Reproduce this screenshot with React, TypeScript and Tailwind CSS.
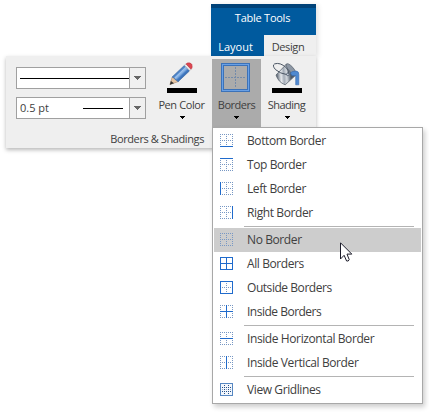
import React from "react";

type Edge = "t" | "b" | "l" | "r" | "h" | "v";

const segments: Record<Edge, number[]> = {
  t: [0, 0.5, 13, 0.5],
  b: [0, 12.5, 13, 12.5],
  l: [0.5, 0, 0.5, 13],
  r: [12.5, 0, 12.5, 13],
  h: [0, 6.5, 13, 6.5],
  v: [6.5, 0, 6.5, 13],
};
const allEdges: Edge[] = ["t", "b", "l", "r", "h", "v"];

function BorderIcon({ solid }: { solid: string }) {
  const line = (e: Edge, on: boolean) => {
    const [x1, y1, x2, y2] = segments[e];
    return (
      <line key={e} x1={x1} y1={y1} x2={x2} y2={y2} stroke={on ? "#206bcc" : "#7898c4"} strokeDasharray={on ? undefined : "1 1"} />
    );
  };
  return (
    <svg width="13" height="13" shapeRendering="crispEdges" className="mt-[5px] shrink-0 self-start">
      {allEdges.filter((e) => !solid.includes(e)).map((e) => line(e, false))}
      {allEdges.filter((e) => solid.includes(e)).map((e) => line(e, true))}
    </svg>
  );
}

function GridlinesIcon() {
  return (
    <svg width="13" height="13" shapeRendering="crispEdges" className="mt-[5px] shrink-0 self-start">
      <rect x="0.5" y="0.5" width="12" height="12" fill="#f3f7fc" stroke="#5687c2" />
      <path d="M2 4.5H11M2 8.5H11" stroke="#254f88" strokeDasharray="1 1" />
      <path d="M2 6.5H11" stroke="#8ba6ca" strokeDasharray="1 1" />
      <path d="M4.5 2V11M8.5 2V11" stroke="#254f88" strokeDasharray="1 1" />
    </svg>
  );
}

function MenuItem({ label, solid, active, spacing = "tracking-[-0.4px]" }: { label: string; solid?: string; active?: boolean; spacing?: string }) {
  return (
    <div className={"flex h-6 items-center gap-3.5 pl-1.5 " + (active ? "bg-[#cdcdcd]" : "")}>
      {solid === undefined ? <GridlinesIcon /> : <BorderIcon solid={solid} />}
      <span className={"whitespace-nowrap " + spacing}>{label}</span>
    </div>
  );
}

function Separator() {
  return (
    <div className="h-[3px] pt-px pr-[7px] pl-[30px]">
      <div className="h-px bg-[#b4b4b4]" />
    </div>
  );
}

function Caret() {
  return (
    <svg width="5" height="3" shapeRendering="crispEdges" className="mt-[3px]">
      <path d="M0 0H5V1H4V2H3V3H2V2H1V1H0Z" fill="#000" />
    </svg>
  );
}

function Combo({ children }: { children: React.ReactNode }) {
  return (
    <div className="flex h-[22px] w-[130px] border border-[#a0a0a0] bg-white">
      <div className="flex w-[112px] items-center">{children}</div>
      <div className="flex flex-1 items-center justify-center border-l border-[#a0a0a0] bg-[#f0f0f0]">
        <svg width="7" height="4" shapeRendering="crispEdges">
          <path d="M0 0H7V1H6V2H5V3H4V4H3V3H2V2H1V1H0Z" fill="#666" />
        </svg>
      </div>
    </div>
  );
}

function PenIcon() {
  return (
    <svg width="30" height="33" viewBox="0 0 30 33">
      <defs>
        <linearGradient id="pen" x1="0.2" y1="0.2" x2="0.8" y2="0.8">
          <stop offset="0" stopColor="#2f65ad" />
          <stop offset=".35" stopColor="#4f86ca" />
          <stop offset=".5" stopColor="#8fb8e8" />
          <stop offset=".65" stopColor="#3f78c0" />
          <stop offset="1" stopColor="#285b9e" />
        </linearGradient>
      </defs>
      <path d="M3 24.5L5.2 17L11.2 21.6Z" fill="#e6c5a2" stroke="#a78566" strokeWidth=".6" />
      <path d="M2.8 24.7L3.9 20.9L7 23.2Z" fill="#333" />
      <path d="M5.2 17L17.4 5.4L22.6 10.8L11 21.8Q10.5 19.9 8.6 19.9Q8 17.6 5.2 17Z" fill="url(#pen)" stroke="#3566a5" strokeWidth=".7" />
      <path d="M7.9 18L19.2 7.2" stroke="#9dc2ec" strokeWidth="1.1" />
      <path d="M17.4 5.4L19 3.9L24 9.2L22.6 10.8Z" fill="#e4e6ea" stroke="#9b9ea5" strokeWidth=".5" />
      <path d="M19 3.9L20.2 3Q23.3 2.3 24.7 4.2Q25.5 6.2 25 8.1L24 9.2Z" fill="#dc4650" stroke="#b8323f" strokeWidth=".5" />
      <rect y="28" width="30" height="5" fill="#000" />
    </svg>
  );
}

function BucketIcon() {
  return (
    <svg width="30" height="33" viewBox="0 0 30 33">
      <defs>
        <linearGradient id="metal" gradientUnits="userSpaceOnUse" x1="5" y1="18" x2="19" y2="17">
          <stop offset="0" stopColor="#5d6774" />
          <stop offset=".3" stopColor="#e6e9ed" />
          <stop offset=".5" stopColor="#a3abb6" />
          <stop offset=".7" stopColor="#d3d8de" />
          <stop offset="1" stopColor="#4d5968" />
        </linearGradient>
      </defs>
      <path d="M14.5 4L23.6 15.3L13.2 24.8Q6.5 22.5 4 15Z" fill="url(#metal)" stroke="#59636f" strokeWidth=".8" />
      <path d="M14.3 4Q16.2 2.6 20.8 7.4Q25.1 12.5 23.6 15.3Q21.3 15.8 17.2 10.8Q13.3 6 14.3 4Z" fill="#8d97a4" stroke="#59636f" strokeWidth=".8" />
      <path d="M15.6 14.8Q8 13.6 3.6 9.7Q-.2 5.5 2.6 3.9Q8 2 14.3 7.7Q17.3 11 16.4 14.4" fill="none" stroke="#4a5563" strokeWidth="1" />
      <circle cx="15.8" cy="14.4" r="1.3" fill="#c5cdd6" stroke="#47566a" strokeWidth=".8" />
      <path d="M18.5 13.1Q18.8 11.4 24 11Q27 11.3 26.8 14.4V24.8H23.7V15.7L19.8 15.6Z" fill="#4f89d0" stroke="#3468ae" strokeWidth=".6" />
      <rect y="28" width="30" height="5" fill="#000" />
    </svg>
  );
}

function BordersIcon() {
  return (
    <svg width="29" height="29" shapeRendering="crispEdges">
      <rect x=".5" y=".5" width="28" height="28" fill="none" stroke="#3c72b8" />
      <rect x="1.5" y="1.5" width="26" height="26" fill="none" stroke="#69a0e5" />
      <rect x="2.5" y="2.5" width="24" height="24" fill="none" stroke="#3c72b8" />
      <path d="M4 14.5H25M14.5 4V25" stroke="#748baa" strokeDasharray="2 1" />
    </svg>
  );
}

export default function App() {
  return (
    <div className="relative h-[412px] w-[429px] overflow-hidden bg-white font-['Open_Sans',sans-serif] text-[12px] leading-4 text-[#404040]">
      <div className="flex flex-col pt-1 pl-1.5 text-[11px]">
        <div className="ml-[205px] flex h-[52px] w-[105px] flex-col border-t-4 border-[#004278] bg-[#005a9e] text-white shadow-[2px_1px_5px_rgba(0,0,0,0.12)]">
          <div className="flex h-[27px] justify-center pt-0.5 pr-0.5 tracking-[-0.25px]">Table Tools</div>
          <div className="flex h-[21px]">
            <div className="flex w-[53px] justify-center pt-1 pr-1">Layout</div>
            <div className="flex flex-1 justify-center bg-[#efefef] pt-1 pr-1 tracking-[-0.4px] text-[#404040]">Design</div>
          </div>
        </div>
        <div className="relative flex h-[92px] w-[310px] bg-[#efefef] shadow-[0_2px_4px_rgba(0,0,0,0.28)]">
          <div className="flex w-[206px] flex-col">
            <div className="flex h-[75px] pt-[3px]">
              <div className="flex w-[146px] flex-col gap-2 pt-2 pl-2.5">
                <Combo><div className="ml-[3px] h-px w-[109px] bg-black" /></Combo>
                <Combo>
                  <span className="ml-[3px] w-[63px] whitespace-nowrap">0.5 pt</span>
                  <div className="h-px w-10 bg-black" />
                </Combo>
              </div>
              <div className="flex w-[60px] flex-col items-center">
                <div className="h-[38px] pt-px"><PenIcon /></div>
                <span className="pr-px whitespace-nowrap tracking-[-0.4px]">Pen Color</span>
                <Caret />
              </div>
            </div>
            <div className="pr-2 text-right tracking-[-0.4px]">Borders &amp; Shadings</div>
          </div>
          <div className="mt-[3px] flex w-[49px] flex-col items-center bg-[#ababab]">
            <div className="h-[38px] w-[31px] pt-1"><BordersIcon /></div>
            <span className="tracking-[-0.5px]">Borders</span>
            <Caret />
          </div>
          <div className="mt-[3px] flex w-[52px] flex-col items-center">
            <div className="h-[38px] pt-px"><BucketIcon /></div>
            <span className="pr-px tracking-[-0.5px]">Shading</span>
            <Caret />
          </div>
        </div>
      </div>
      <div className="absolute top-[127px] left-[212px] w-[211px] border border-[#a8a8a8] bg-white p-px shadow-[2px_3px_5px_rgba(0,0,0,0.2)]">
        <MenuItem label="Bottom Border" solid="b" />
        <MenuItem label="Top Border" solid="t" />
        <MenuItem label="Left Border" solid="l" />
        <MenuItem label="Right Border" solid="r" />
        <Separator />
        <MenuItem label="No Border" solid="" active />
        <MenuItem label="All Borders" solid="tblrhv" />
        <MenuItem label="Outside Borders" solid="tblr" spacing="tracking-[-0.45px]" />
        <MenuItem label="Inside Borders" solid="hv" spacing="tracking-[-0.5px]" />
        <Separator />
        <MenuItem label="Inside Horizontal Border" solid="h" />
        <MenuItem label="Inside Vertical Border" solid="v" />
        <Separator />
        <MenuItem label="View Gridlines" />
      </div>
      <svg className="absolute top-[242px] left-[340px]" width="13" height="20" viewBox="0 0 13 20">
        <path d="M.5.8V17L4.1 13.3L6.6 19H8.2L9.2 17.6L7 12.1H11.8Z" fill="#fff" stroke="#1d1d2b" strokeWidth="1" />
      </svg>
    </div>
  );
}
